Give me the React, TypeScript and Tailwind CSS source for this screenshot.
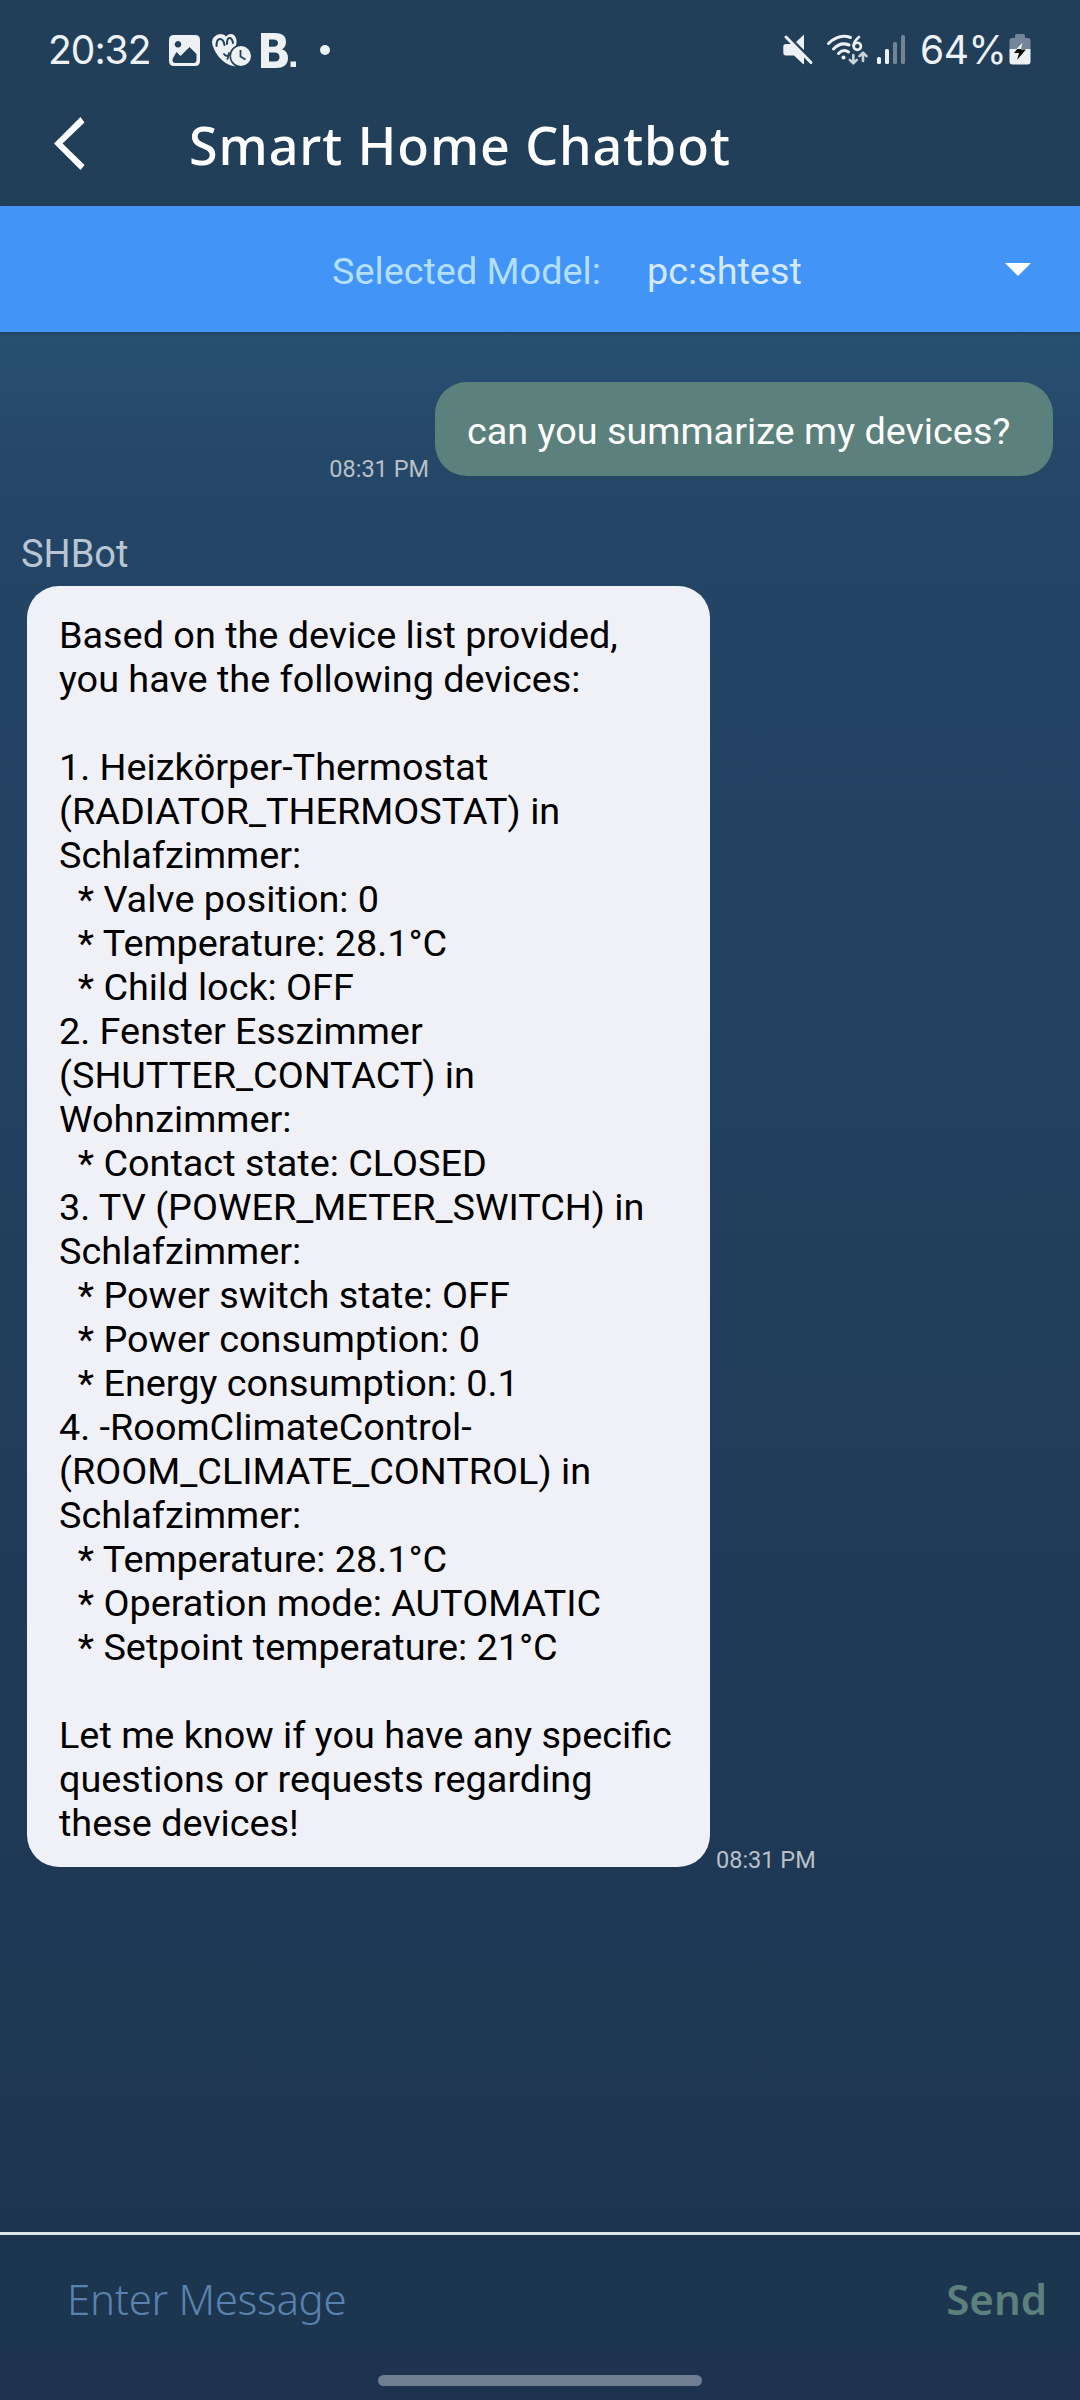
import React from "react";

const reply = `Based on the device list provided,
you have the following devices:

1. Heizkörper-Thermostat
(RADIATOR_THERMOSTAT) in
Schlafzimmer:
  * Valve position: 0
  * Temperature: 28.1°C
  * Child lock: OFF
2. Fenster Esszimmer
(SHUTTER_CONTACT) in
Wohnzimmer:
  * Contact state: CLOSED
3. TV (POWER_METER_SWITCH) in
Schlafzimmer:
  * Power switch state: OFF
  * Power consumption: 0
  * Energy consumption: 0.1
4. -RoomClimateControl-
(ROOM_CLIMATE_CONTROL) in
Schlafzimmer:
  * Temperature: 28.1°C
  * Operation mode: AUTOMATIC
  * Setpoint temperature: 21°C

Let me know if you have any specific
questions or requests regarding
these devices!`;

function NotificationIcons() {
  return (
    <svg className="ml-[18px] h-[40px] w-[170px]" viewBox="168 30 170 40" fill="#eef1f4">
      <path
        fillRule="evenodd"
        d="M174 35h21q5 0 5 5v21q0 5-5 5h-21q-5 0-5-5v-21q0-5 5-5zM172.500 59v1q0 3 3 3h18q3 0 3-3v-6l-7-7-9 9-4-4zM178 41a3.300 3.300 0 1 0 .01 0z"
      />
      <path d="M214 37q4-4 9-2.500 2 .5 3 2 4-4 8-1.500 3 3 2.500 8-.5 4-2.500 7-2 5-1 9 1 4 4 7-7 1-14-5-6-5-9-12-4-8 0-12z" />
      <path d="M216.500 46q0-7 3.500-7 3.500 0 4.500 6M227 44q0-6 2.500-6 2.500 0 3.500 5" fill="none" stroke="#213f58" strokeWidth="2" strokeLinecap="round" />
      <path d="M224 54q2 3 5 1M229 53l-1.500 6" fill="none" stroke="#213f58" strokeWidth="1.800" strokeLinecap="round" />
      <circle cx="241" cy="56" r="10.800" stroke="#213f58" strokeWidth="1.600" />
      <path d="M240.500 50v6.500l5 3" fill="none" stroke="#213f58" strokeWidth="1.800" />
      <path fillRule="evenodd" d="M261 33h13.500q11.500 0 11.500 9 0 5-4 7.300 6 2.200 6 8.700 0 10-12.500 10h-14.500zM269 39.500v7.200h4.500q4.500 0 4.500-3.600 0-3.600-4.500-3.600zM269 52.500v9h5.500q5 0 5-4.500 0-4.500-5-4.500z" />
      <path d="M290.500 61.500h5.500v5.500h-5.500z" />
      <circle cx="325" cy="50" r="5" />
    </svg>
  );
}

function SignalIcons() {
  return (
    <svg className="h-[40px] w-[126px]" viewBox="782 30 126 40" fill="#eef1f4">
      <path d="M804 34.500v17.500L795 43z" />
      <path d="M786 44h7l11 11v8.500q0 1-1 .5l-9-8.500h-8q-2.700 0-2.700-2.700v-6q0-2.800 2.700-2.800z" />
      <path d="M787.500 35L813.500 61" stroke="#213f58" strokeWidth="2" />
      <path d="M786 37L811 62.500" stroke="#eef1f4" strokeWidth="3" strokeLinecap="round" />
      <g fill="none" stroke="#eef1f4" strokeWidth="3" strokeLinecap="round">
        <path d="M828.500 43.500Q839 33.500 850.500 37.500" />
        <path d="M833.500 49Q840.500 41.500 849 45" />
        <path d="M838.500 53.500Q843.500 48.500 848.500 52" />
        <path d="M859 37q-5 4-5.500 9" strokeWidth="2.600" />
        <circle cx="857.300" cy="46.300" r="3.600" strokeWidth="2.600" />
      </g>
      <circle cx="843.500" cy="57.500" r="2" />
      <g fill="none" stroke="#c9d1d9" strokeWidth="2.600" strokeLinecap="round" strokeLinejoin="round">
        <path d="M853.300 55v8M849.800 59.800l3.500 3.500 3.500-3.500" />
        <path d="M863 61v-8M859.500 56.200l3.500-3.500 3.500 3.500" />
      </g>
      <rect x="877" y="57" width="4" height="7" rx="1.500" />
      <rect x="885" y="49" width="4" height="15" rx="1.500" />
      <rect x="893" y="42" width="4" height="22" rx="1.500" opacity=".4" />
      <rect x="901" y="35" width="4" height="29" rx="1.500" opacity=".4" />
    </svg>
  );
}

function Battery() {
  return (
    <svg className="h-[32px] w-[22px]" viewBox="0 0 22 32">
      <path d="M6 4v-2q0-2 2-2h6q2 0 2 2v2h3q2.500 0 2.500 2.500v8.500h-21v-8.500q0-2.500 2.500-2.500z" fill="#74859a" />
      <path d="M.5 15h21v12.500q0 3-3 3h-15q-3 0-3-3z" fill="#eef1f4" />
      <path d="M13 9L5 19h5l-2 7 9-10.500H12z" fill="#111" />
      <path d="M13.500 8.500L7.500 15h4.700z" fill="#eef1f4" />
    </svg>
  );
}

export default function App() {
  return (
    <div className="flex h-[2400px] w-[1080px] flex-col overflow-hidden bg-[#1e3350] font-[Roboto,sans-serif]">
      <header className="h-[206px] bg-[#213f58]">
        <div className="flex h-[100px] items-center pl-[48px] pr-[49px] font-[Inter,sans-serif] text-[39px] text-[#eef1f4]">
          <span className="w-[102px] whitespace-nowrap font-normal tracking-[-1px]">20:32</span>
          <NotificationIcons />
          <div className="ml-auto flex items-center">
            <SignalIcons />
            <span className="ml-[12px] w-[89px] whitespace-nowrap font-normal tracking-[-0.4px]">64%</span>
            <Battery />
          </div>
        </div>
        <div className="flex h-[88px] items-center pl-[54px]">
          <svg className="h-[54px] w-[32px]" viewBox="0 0 32 54" fill="#fff">
            <path d="M26.500 0L30.500 5.500 8.500 26.500 30.500 48 26.500 53 0 26.500z" />
          </svg>
          <h1 className="ml-[103px] whitespace-nowrap pt-[2px] font-['Noto_Sans',sans-serif] text-[52px] font-medium leading-none tracking-[0.9px] text-white">Smart Home Chatbot</h1>
        </div>
      </header>

      <div className="z-10 flex h-[126px] items-center bg-[#4294f7] pl-[332px] pr-[49px] text-[37.8px] shadow-[0_1px_3px_rgba(0,0,0,0.25)]">
        <span className="w-[315px] pt-[4px] text-[#b3dffb]">Selected Model:</span>
        <span className="pt-[4px] text-[#d3e8fd]">pc:shtest</span>
        <svg className="ml-auto h-[13px] w-[26px]" viewBox="0 0 26 13">
          <path d="M0 0h26L13 13z" fill="#fff" />
        </svg>
      </div>

      <main className="flex h-[1903px] flex-col bg-[linear-gradient(#284f70_0px,#244566_170px,#203b59_1250px,#1d3550_1900px)]">
        <div className="mt-[50px] flex items-end justify-end pr-[27px]">
          <span className="mr-[6px] text-[23.5px] leading-[14px] text-[#b9c0c8]">08:31 PM</span>
          <p className="flex h-[94px] w-[618px] items-center rounded-[32px] bg-[#5c807b] pl-[32px] pt-[4px] text-[37.8px] text-white">can you summarize my devices?</p>
        </div>
        <div className="mt-[56px] h-[54px] pl-[21px] text-[38px] leading-[44px] text-[#b8c6d3]">SHBot</div>
        <div className="flex items-end pl-[27px]">
          <p className="h-[1281px] w-[683px] whitespace-pre rounded-[32px] bg-[#f0f1f6] pl-[32px] pt-[27px] text-[37.8px] leading-[44px] text-black">{reply}</p>
          <span className="ml-[6px] text-[23.5px] leading-[13px] text-[#b9c0c8]">08:31 PM</span>
        </div>
        <div className="mt-auto h-[3px] shrink-0 bg-[#dde4ea]" />
      </main>

      <footer className="h-[165px]">
        <div className="flex h-[115px] items-center justify-between bg-[#1d3650] pl-[67px] pr-[33px] pt-[12px] font-['Noto_Sans',sans-serif] text-[42px]">
          <span className="font-light tracking-[-0.3px] text-[#5a82ae]">Enter Message</span>
          <span className="font-semibold text-[#5c807b]">Send</span>
        </div>
        <div className="mx-auto mt-[25px] h-[11px] w-[324px] rounded-full bg-[#6f7e91]" />
      </footer>
    </div>
  );
}
